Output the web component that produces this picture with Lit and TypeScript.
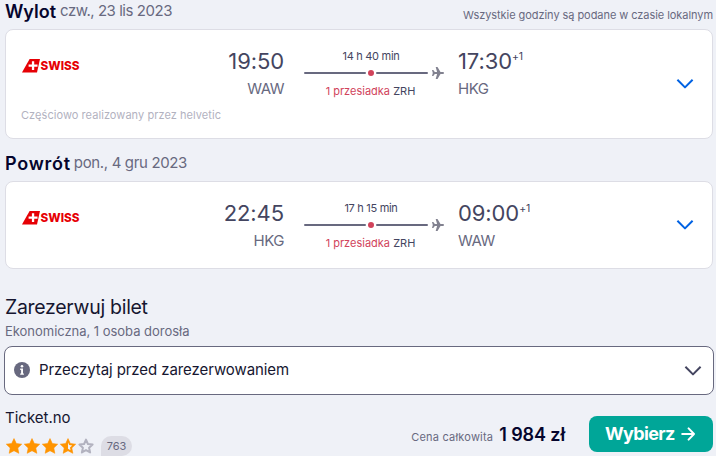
import { html, css, svg, nothing, LitElement } from "lit";
import { customElement, property } from "lit/decorators.js";

@customElement("chevron-icon")
export class ChevronIcon extends LitElement {
  static styles = css`
    :host {
      display: block;
      width: 18px;
      height: 12px;
    }
    svg {
      display: block;
    }
  `;

  render() {
    return html`
      <svg width="18" height="12" viewBox="0 0 18 12" fill="none" stroke="currentColor" stroke-width="2">
        <path d="M1.4 1.8 L9 9.4 L16.6 1.8" stroke-linejoin="round" />
      </svg>
    `;
  }
}

@customElement("swiss-logo")
export class SwissLogo extends LitElement {
  static styles = css`
    :host {
      display: block;
      width: 60px;
      height: 18px;
    }
    svg {
      display: block;
    }
    text {
      font-family: Inter, "Liberation Sans", sans-serif;
      font-size: 12px;
      font-weight: 800;
    }
  `;

  render() {
    return html`
      <svg width="60" height="18" viewBox="0 -2 60 18">
        <path d="M7.6 0 H18 L15 13.6 H0 Z" fill="#e60005" />
        <path d="M9.9 2.2 h2.3 v3.3 h3.3 v2.3 h-3.3 v3.3 h-2.3 v-3.3 h-3.3 v-2.3 h3.3 z" fill="#fff" />
        <text x="18.5" y="11.3" fill="#e60005" textLength="39" lengthAdjust="spacingAndGlyphs">SWISS</text>
      </svg>
    `;
  }
}

@customElement("flight-leg")
export class FlightLeg extends LitElement {
  @property() depTime = "";
  @property() depCode = "";
  @property() arrTime = "";
  @property() arrCode = "";
  @property() duration = "";
  @property() note = "";

  static styles = css`
    :host {
      display: flex;
      align-items: center;
      box-sizing: border-box;
      border: 1px solid #dddde5;
      border-radius: 8px;
      background: #fff;
      padding-right: 18px;
    }
    .body {
      flex: 1;
      align-self: stretch;
      padding: 14px 0 0 15px;
    }
    .row {
      display: grid;
      grid-template-columns: 180px 84px 140px 120px;
      height: 56px;
    }
    .logo {
      padding: 13px 0 0 1px;
    }
    .dep {
      padding-right: 1px;
      text-align: right;
    }
    .route {
      margin-left: 19px;
      width: 140px;
      text-align: center;
    }
    .arr {
      margin-left: 33px;
    }
    .time {
      display: flex;
      height: 34px;
      line-height: 35px;
      font-size: 22px;
      letter-spacing: -0.1px;
      color: #444560;
    }
    .dep .time {
      justify-content: flex-end;
    }
    .day {
      font-size: 10.5px;
      line-height: 26px;
    }
    .code {
      font-size: 15px;
      line-height: 22px;
      letter-spacing: -0.5px;
      color: #68697f;
    }
    .duration {
      height: 22px;
      padding: 4px 6px 0 0;
      box-sizing: border-box;
      font-size: 11px;
      line-height: 16px;
      letter-spacing: -0.3px;
      color: #444560;
    }
    .line {
      display: flex;
      align-items: center;
      height: 14px;
    }
    .bar {
      height: 2px;
      border-radius: 1px;
      background: #68697f;
    }
    .before {
      width: 62px;
    }
    .after {
      width: 52px;
    }
    .dot {
      width: 6px;
      height: 6px;
      margin: 0 2px;
      border-radius: 50%;
      background: #d1435b;
    }
    .plane {
      margin-left: 4px;
    }
    .stops {
      padding: 3px 7px 0 0;
      font-size: 11px;
      line-height: 16px;
      color: #444560;
      white-space: nowrap;
    }
    .red {
      color: #d1435b;
    }
    .note {
      padding-top: 7px;
      font-size: 11px;
      line-height: 16px;
      letter-spacing: 0.06px;
      color: #b2b2bf;
    }
    .chevron {
      color: #0062e3;
    }
  `;

  render() {
    return html`
      <div class="body">
        <div class="row">
          <div class="logo"><swiss-logo></swiss-logo></div>
          <div class="dep">
            <div class="time">${this.depTime}</div>
            <div class="code">${this.depCode}</div>
          </div>
          <div class="route">
            <div class="duration">${this.duration}</div>
            <div class="line">
              <div class="bar before"></div>
              <div class="dot"></div>
              <div class="bar after"></div>
              <svg class="plane" width="12" height="12" viewBox="0 0 12 12" fill="#81818f">
                <path d="M0 3 h1.3 l1.5 2 h2.3 L3.7 0 h1.8 l3 5 h2.5 a1 1 0 0 1 0 2 h-2.5 l-3 5 H3.7 l1.4 -5 H2.8 L1.3 9 H0 l.8 -3 z" />
              </svg>
            </div>
            <div class="stops"><span class="red">1 przesiadka</span> ZRH</div>
          </div>
          <div class="arr">
            <div class="time">${this.arrTime}<span class="day">+1</span></div>
            <div class="code">${this.arrCode}</div>
          </div>
        </div>
        ${this.note ? html`<div class="note">${this.note}</div>` : nothing}
      </div>
      <chevron-icon class="chevron"></chevron-icon>
    `;
  }
}

const STAR = "M8 0.6 L10.3 5.5 L15.7 6.2 L11.8 9.9 L12.8 15.3 L8 12.7 L3.2 15.3 L4.2 9.9 L0.3 6.2 L5.7 5.5 Z";
// right half of the star's inside, left open for half points
const HALF = "M8 4.4 L9.2 7.1 L12.2 7.5 L10 9.5 L10.5 12.2 L8 10.8 Z";

@customElement("star-rating")
export class StarRating extends LitElement {
  @property({ type: Number }) value = 0;

  static styles = css`
    :host {
      display: flex;
      gap: 2px;
    }
  `;

  star(i: number) {
    const left = this.value - i;
    if (left >= 1) return svg`<path d=${STAR} fill="#ff9400" stroke="#ff9400" stroke-width=".6" stroke-linejoin="round" />`;
    if (left > 0) {
      return svg`
        <path d=${STAR} fill="#ff9400" stroke="#ff9400" stroke-width=".6" stroke-linejoin="round" />
        <path d=${HALF} fill="#eff1f7" />`;
    }
    return svg`<path d="M8 1.6 L9.9 6 L14.6 6.6 L11.1 9.7 L12.1 14.4 L8 12.1 L3.9 14.4 L4.9 9.7 L1.4 6.6 L6.1 6 Z" fill="none" stroke="#b2b2bf" stroke-width="2" stroke-linejoin="round" />`;
  }

  render() {
    return [0, 1, 2, 3, 4].map(
      (i) => html`<svg width="16" height="16" viewBox="0 0 16 16">${this.star(i)}</svg>`
    );
  }
}

@customElement("app-root")
export class AppRoot extends LitElement {
  static styles = css`
    :host {
      display: block;
      width: 716px;
      height: 456px;
      overflow: hidden;
      box-sizing: border-box;
      padding: 0 3px 0 5px;
      background: #eff1f7;
      color: #161616;
      font-family: Inter, "Liberation Sans", sans-serif;
      white-space: nowrap;
    }
    .head {
      display: flex;
      height: 29px;
      box-sizing: border-box;
    }
    .back {
      height: 42px;
      padding-top: 13px;
    }
    .title {
      font-size: 18px;
      font-weight: 600;
      line-height: 24px;
      color: #05052d;
    }
    .back .title {
      letter-spacing: 0.75px;
      line-height: 23px;
    }
    .date {
      flex: 1;
      margin-left: 4px;
      font-size: 15px;
      line-height: 22px;
      letter-spacing: -0.46px;
      color: #68697f;
    }
    .back .date {
      margin-left: 3px;
      letter-spacing: -0.35px;
    }
    .local {
      font-size: 11px;
      line-height: 30px;
      letter-spacing: -0.06px;
      color: #68697f;
    }
    .first {
      height: 110px;
    }
    .second {
      height: 88px;
    }
    .book {
      padding-top: 26px;
      font-size: 19.5px;
      line-height: 25px;
      letter-spacing: -0.3px;
      color: #161630;
    }
    .cabin {
      height: 26px;
      font-size: 13px;
      line-height: 23px;
      letter-spacing: -0.03px;
      color: #68697f;
    }
    .read {
      display: flex;
      align-items: center;
      box-sizing: border-box;
      height: 49px;
      margin: 0 -1px;
      padding: 0 11px 0 9px;
      border: 1px solid #68697f;
      border-radius: 8px;
      background: #fff;
    }
    .info {
      margin-bottom: 1px;
    }
    .label {
      flex: 1;
      margin-left: 9px;
      padding-bottom: 2px;
      font-size: 15px;
      letter-spacing: -0.08px;
      color: #161630;
    }
    .down {
      color: #444560;
    }
    .offer {
      display: flex;
      height: 61px;
    }
    .seller {
      flex: 1;
      padding-top: 13px;
    }
    .name {
      font-size: 15px;
      line-height: 20px;
      color: #161630;
    }
    .rating {
      display: flex;
      margin-top: 8px;
      padding-left: 1px;
    }
    .stars {
      margin-top: 2px;
    }
    .count {
      width: 31px;
      height: 20px;
      margin-left: 7px;
      border-radius: 10px 10px 10px 0;
      background: #dddde5;
      font-size: 11px;
      line-height: 20px;
      text-align: center;
      color: #68697f;
    }
    .price {
      display: flex;
      align-items: baseline;
      height: 30px;
      padding: 28px 24px 0 0;
    }
    .total {
      font-size: 11px;
      letter-spacing: 0.2px;
      color: #68697f;
    }
    .amount {
      margin-left: 6px;
      font-size: 18px;
      line-height: 24px;
      letter-spacing: -0.1px;
      font-weight: 600;
      color: #05052d;
    }
    .select {
      display: flex;
      align-items: center;
      box-sizing: border-box;
      width: 124px;
      height: 36px;
      margin-top: 21px;
      padding: 0 0 0 16px;
      border: 0;
      border-radius: 8px;
      background: #00a698;
      color: #fff;
      font-family: inherit;
      font-size: 18px;
      letter-spacing: -0.65px;
      font-weight: 700;
    }
    .wybierz {
      padding-bottom: 1px;
    }
    .arrow {
      margin-left: 6px;
    }
  `;

  render() {
    return html`
      <div class="head">
        <span class="title">Wylot</span>
        <span class="date">czw., 23 lis 2023</span>
        <span class="local">Wszystkie godziny są podane w czasie lokalnym</span>
      </div>
      <flight-leg
        class="first"
        .depTime=${"19:50"}
        .depCode=${"WAW"}
        .arrTime=${"17:30"}
        .arrCode=${"HKG"}
        .duration=${"14 h 40 min"}
        .note=${"Częściowo realizowany przez helvetic"}
      ></flight-leg>
      <div class="head back">
        <span class="title">Powrót</span>
        <span class="date">pon., 4 gru 2023</span>
      </div>
      <flight-leg
        class="second"
        .depTime=${"22:45"}
        .depCode=${"HKG"}
        .arrTime=${"09:00"}
        .arrCode=${"WAW"}
        .duration=${"17 h 15 min"}
      ></flight-leg>
      <div class="book">Zarezerwuj bilet</div>
      <div class="cabin">Ekonomiczna, 1 osoba dorosła</div>
      <div class="read">
        <svg class="info" width="16" height="16" viewBox="0 0 16 16">
          <circle cx="8" cy="8" r="8" fill="#68697f" />
          <circle cx="8" cy="4.3" r="1.3" fill="#fff" />
          <path d="M6.2 6.6 h2.8 v4.8 h.9 v1.3 H6.2 v-1.3 h.9 V7.9 h-.9 z" fill="#fff" />
        </svg>
        <span class="label">Przeczytaj przed zarezerwowaniem</span>
        <chevron-icon class="down"></chevron-icon>
      </div>
      <div class="offer">
        <div class="seller">
          <div class="name">Ticket.no</div>
          <div class="rating">
            <star-rating class="stars" .value=${3.5}></star-rating>
            <span class="count">763</span>
          </div>
        </div>
        <div class="price">
          <span class="total">Cena całkowita</span>
          <span class="amount">1 984 zł</span>
        </div>
        <button class="select">
          <span class="wybierz">Wybierz</span>
          <svg class="arrow" width="14" height="14" viewBox="0 0 14 14" fill="none" stroke="#fff" stroke-width="2">
            <path d="M1.2 7 H13 M7.6 1.4 L13 7 L7.6 12.6" stroke-linecap="round" stroke-linejoin="round" />
          </svg>
        </button>
      </div>
    `;
  }
}
